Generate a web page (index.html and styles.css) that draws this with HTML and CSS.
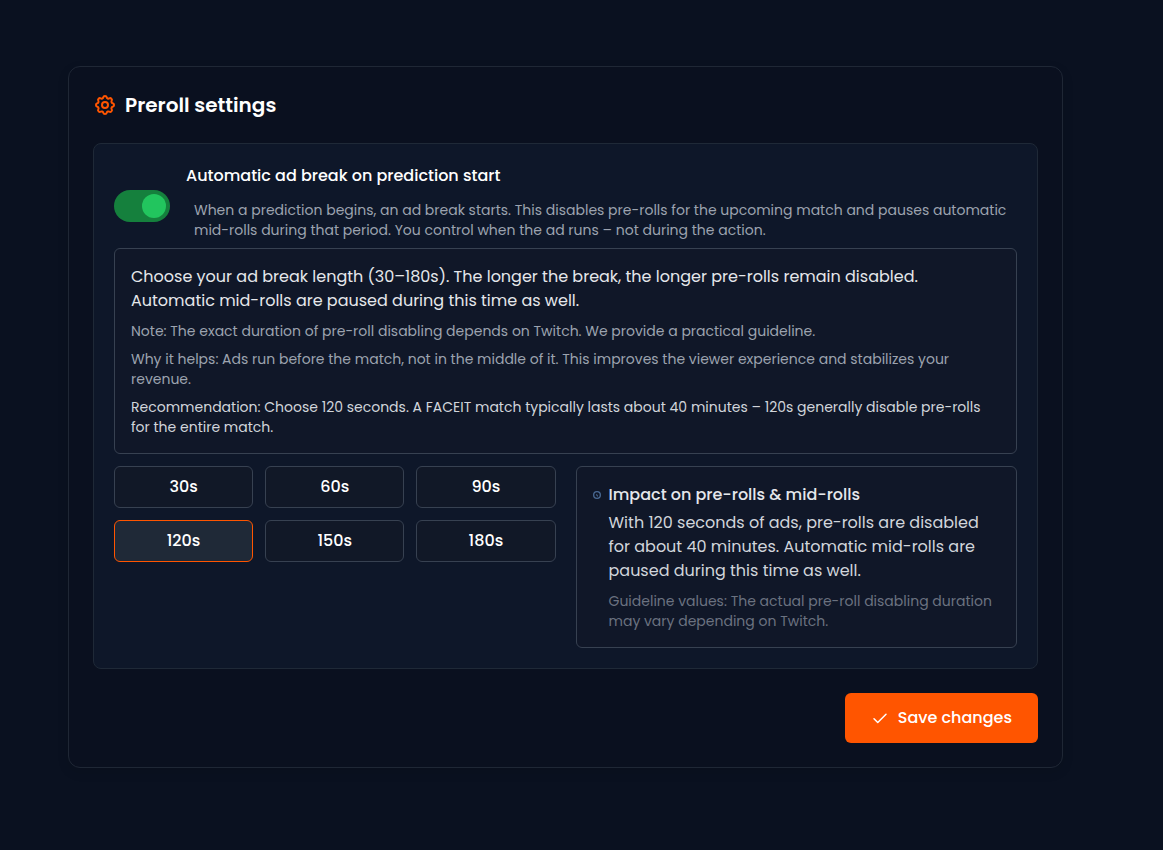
FILE: index.html
```html
<!DOCTYPE html>
<html lang="en">
<head>
    <meta charset="UTF-8">
    <meta name="viewport" content="width=device-width, initial-scale=1.0">
    <title>Preroll settings</title>
    <link rel="stylesheet" href="styles.css">
</head>
<body>

<main class="card">
    <h1 class="card-title">
        <svg class="title-icon" viewBox="0 0 24 24" fill="none" stroke="currentColor" stroke-width="2" stroke-linecap="round" stroke-linejoin="round" aria-hidden="true">
            <path d="M10.3 4.3c.4-1.8 3-1.8 3.4 0a1.7 1.7 0 0 0 2.6 1.1c1.5-.9 3.3.8 2.4 2.4a1.7 1.7 0 0 0 1 2.5c1.8.5 1.8 3 0 3.4a1.7 1.7 0 0 0-1 2.6c.9 1.5-.9 3.3-2.4 2.4a1.7 1.7 0 0 0-2.6 1c-.4 1.8-3 1.8-3.4 0a1.7 1.7 0 0 0-2.6-1c-1.5.9-3.3-.9-2.4-2.4a1.7 1.7 0 0 0-1-2.6c-1.8-.4-1.8-2.9 0-3.4a1.7 1.7 0 0 0 1-2.5c-.9-1.6.9-3.3 2.4-2.4a1.7 1.7 0 0 0 2.6-1.1z"/>
            <circle cx="12" cy="12" r="3"/>
        </svg>
        Preroll settings
    </h1>

    <section class="panel">
        <!-- Toggle row -->
        <div class="toggle-row">
            <input type="checkbox" class="switch" id="autoAd" checked>
            <div class="toggle-text">
                <label for="autoAd">Automatic ad break on prediction start</label>
                <p class="toggle-hint">When a prediction begins, an ad break starts. This disables pre-rolls for the upcoming match and pauses automatic mid-rolls during that period. You control when the ad runs – not during the action.</p>
            </div>
        </div>

        <div class="box info">
            <p class="lead">Choose your ad break length (30–180s). The longer the break, the longer pre-rolls remain disabled. Automatic mid-rolls are paused during this time as well.</p>
            <p class="small">Note: The exact duration of pre-roll disabling depends on Twitch. We provide a practical guideline.</p>
            <p class="small">Why it helps: Ads run before the match, not in the middle of it. This improves the viewer experience and stabilizes your revenue.</p>
            <p class="small recommend">Recommendation: Choose 120 seconds. A FACEIT match typically lasts about 40 minutes – 120s generally disable pre-rolls for the entire match.</p>
        </div>

        <div class="columns">
            <!-- Ad lengths -->
            <div class="lengths">
                <button type="button" class="length" aria-pressed="false">30s</button>
                <button type="button" class="length" aria-pressed="false">60s</button>
                <button type="button" class="length" aria-pressed="false">90s</button>
                <button type="button" class="length active" aria-pressed="true">120s</button>
                <button type="button" class="length" aria-pressed="false">150s</button>
                <button type="button" class="length" aria-pressed="false">180s</button>
            </div>

            <div class="box impact">
                <svg class="impact-icon" viewBox="0 0 24 24" fill="none" stroke="currentColor" stroke-width="4" stroke-linecap="round" aria-hidden="true">
                    <circle cx="12" cy="12" r="10"/>
                    <path d="M11 11h1v4h2" stroke-width="3"/>
                </svg>
                <div class="impact-text">
                    <h2>Impact on pre-rolls &amp; mid-rolls</h2>
                    <p class="impact-body">With 120 seconds of ads, pre-rolls are disabled for about 40 minutes. Automatic mid-rolls are paused during this time as well.</p>
                    <p class="small muted">Guideline values: The actual pre-roll disabling duration may vary depending on Twitch.</p>
                </div>
            </div>
        </div>
    </section>

    <div class="actions">
        <button type="submit" class="save">
            <svg class="save-icon" viewBox="0 0 24 24" fill="none" stroke="currentColor" stroke-width="2" stroke-linecap="round" stroke-linejoin="round" aria-hidden="true">
                <path d="M4 13l5 5L20 7"/>
            </svg>
            Save changes
        </button>
    </div>
</main>

</body>
</html>
```
FILE: styles.css
```css
* {
    box-sizing: border-box;
}
body {
    margin: 0;
    padding: 66px 100px 66px 68px;
    background-color: #0a1120;
    color: #fff;
    font-family: Poppins, Inter, sans-serif;
    font-size: 16px;
    line-height: 24px;
}
h1, h2, p {
    margin: 0;
}
button {
    font: inherit;
    font-weight: 500;
    color: #fff;
    cursor: pointer;
}
.card {
    padding: 24px;
    border: 1px solid #1f2735;
    border-radius: 12px;
    background-color: #0a101f;
    box-shadow: 0 4px 12px rgba(0, 0, 0, 0.1);
}
.card-title {
    display: flex;
    align-items: center;
    gap: 8px;
    margin-bottom: 24px;
    font-size: 20px;
    font-weight: 600;
    line-height: 28px;
}
.title-icon {
    width: 24px;
    height: 24px;
    color: #ff5500;
}
.panel {
    padding: 20px;
    border: 1px solid #1f2937;
    border-radius: 8px;
    background-color: #0e1729;
}
.toggle-row {
    display: flex;
    align-items: center;
    gap: 16px;
}
.switch {
    appearance: none;
    flex: none;
    display: flex;
    align-items: center;
    width: 56px;
    height: 32px;
    margin: 0;
    padding: 4px;
    border-radius: 16px;
    background-color: #374151;
    cursor: pointer;
}
.switch::before {
    content: "";
    width: 24px;
    height: 24px;
    border-radius: 50%;
    background-color: #9ca3af;
}
.switch:checked {
    justify-content: flex-end;
    background-color: #15803d;
}
.switch:checked::before {
    background-color: #22c55e;
}
.toggle-text label {
    display: block;
    font-weight: 500;
}
.toggle-hint {
    padding: 12px 8px 8px;
    font-size: 14px;
    line-height: 20px;
    color: #9ca3af;
}
.box {
    padding: 16px;
    border: 1px solid #374151;
    border-radius: 6px;
    background-color: #101728;
}
.lead {
    color: #e5e7eb;
}
.small {
    margin-top: 8px;
    font-size: 14px;
    line-height: 20px;
    color: #9ca3af;
}
.recommend {
    color: #d1d5db;
}
.columns {
    display: grid;
    grid-template-columns: 1fr 1fr;
    gap: 20px;
    margin-top: 12px;
}
.lengths {
    display: grid;
    grid-template-columns: repeat(3, 1fr);
    align-content: start;
    gap: 12px;
}
.length {
    height: 42px;
    padding: 0 12px;
    border: 1px solid #374151;
    border-radius: 6px;
    background-color: #111827;
}
.length.active {
    border-color: #ff5500;
    background-color: #1f2937;
}
.impact {
    display: flex;
    gap: 8px;
}
.impact-icon {
    flex: none;
    width: 8px;
    height: 24px;
    color: #4a6a94;
}
.impact h2 {
    margin-bottom: 4px;
    font-size: 16px;
    font-weight: 500;
    color: #e5e7eb;
}
.impact-body {
    color: #d1d5db;
}
.small.muted {
    color: #6b7280;
}
.actions {
    display: flex;
    justify-content: flex-end;
    margin-top: 24px;
}
.save {
    display: flex;
    align-items: center;
    gap: 9px;
    height: 50px;
    padding: 0 26px;
    border: none;
    border-radius: 6px;
    background-color: #ff5500;
}
.save-icon {
    width: 18px;
    height: 18px;
}
```
